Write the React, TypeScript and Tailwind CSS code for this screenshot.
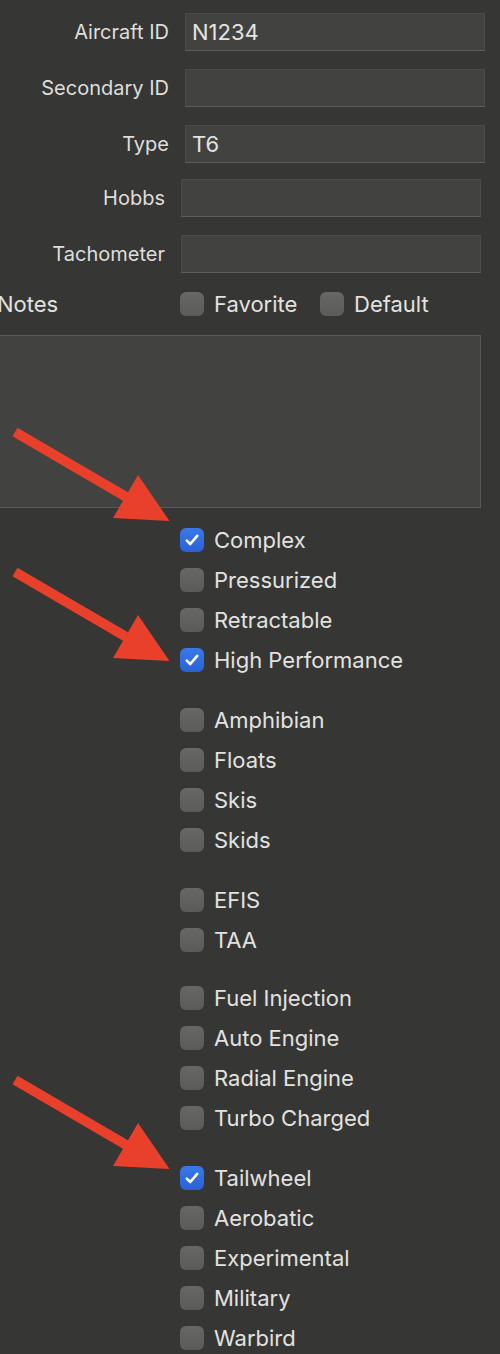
import React from "react";

const font = { fontFamily: '"Inter", "Liberation Sans", sans-serif' };

function Check({ on }: { on?: boolean }) {
  if (on) {
    return (
      <div className="w-[24px] h-[24px] rounded-[6px] bg-gradient-to-b from-[#3a78ea] to-[#2a62d4] flex items-center justify-center shrink-0">
        <svg width="16" height="16" viewBox="0 0 16 16">
          <path d="M2.8 8.6 L6.3 12 L13.2 3.8" fill="none" stroke="white" strokeWidth="2.6" strokeLinecap="round" strokeLinejoin="round" />
        </svg>
      </div>
    );
  }
  return <div className="w-[24px] h-[24px] rounded-[6px] bg-gradient-to-b from-[#676765] to-[#5b5b59] shrink-0" />;
}

function Field({ label, value, labelW, fieldW }: { label: string; value?: string; labelW: number; fieldW: number }) {
  return (
    <div className="flex items-center">
      <div className="text-right text-[20px] text-[#dededc] shrink-0" style={{ width: labelW }}>
        {label}
      </div>
      <div
        className="h-[38px] bg-[#424240] border border-[#4b4b49] border-b-[#5e5e5c] flex items-center px-[6px] text-[22px] text-[#e4e4e2] shrink-0 ml-[16px]"
        style={{ width: fieldW }}
      >
        {value}
      </div>
    </div>
  );
}

function Row({ label, on }: { label: string; on?: boolean }) {
  return (
    <div className="h-[40px] flex items-center pl-[180px]">
      <Check on={on} />
      <span className="ml-[10px] text-[22px] text-[#e2e2e0]">{label}</span>
    </div>
  );
}

function Arrow({ dy }: { dy: number }) {
  const pts = [
    [17.5, 427.7],
    [128, 492.2],
    [138, 475],
    [169.5, 521],
    [113, 518],
    [123, 500.8],
    [12.5, 436.3],
  ]
    .map(([x, y]) => `${x},${y + dy}`)
    .join(" ");
  return <polygon points={pts} fill="#e8402a" />;
}

export default function App() {
  return (
    <div className="w-[500px] h-[1354px] bg-[#363634] relative overflow-hidden" style={font}>
      <div className="pt-[13px]">
        <Field label="Aircraft ID" value="N1234" labelW={169} fieldW={300} />
        <div className="h-[18px]" />
        <Field label="Secondary ID" labelW={169} fieldW={300} />
        <div className="h-[18px]" />
        <Field label="Type" value="T6" labelW={169} fieldW={300} />
        <div className="h-[16px]" />
        <Field label="Hobbs" labelW={165} fieldW={300} />
        <div className="h-[18px]" />
        <Field label="Tachometer" labelW={165} fieldW={300} />

        <div className="mt-[19px] h-[24px] flex items-center">
          <div className="w-[180px] shrink-0 text-[22px] text-[#e2e2e0]">
            <span className="-ml-[3px]">Notes</span>
          </div>
          <div className="w-[140px] shrink-0 flex items-center">
            <Check />
            <span className="ml-[10px] text-[22px] text-[#e2e2e0]">Favorite</span>
          </div>
          <div className="flex items-center">
            <Check />
            <span className="ml-[10px] text-[22px] text-[#e2e2e0]">Default</span>
          </div>
        </div>

        <div className="mt-[19px] -ml-[1px] w-[482px] h-[173px] bg-[#424240] border border-[#5a5a58]" />

        <div className="mt-[12px]">
          <Row label="Complex" on />
          <Row label="Pressurized" />
          <Row label="Retractable" />
          <Row label="High Performance" on />
          <div className="h-[20px]" />
          <Row label="Amphibian" />
          <Row label="Floats" />
          <Row label="Skis" />
          <Row label="Skids" />
          <div className="h-[20px]" />
          <Row label="EFIS" />
          <Row label="TAA" />
          <div className="h-[18px]" />
          <Row label="Fuel Injection" />
          <Row label="Auto Engine" />
          <Row label="Radial Engine" />
          <Row label="Turbo Charged" />
          <div className="h-[20px]" />
          <Row label="Tailwheel" on />
          <Row label="Aerobatic" />
          <Row label="Experimental" />
          <Row label="Military" />
          <Row label="Warbird" />
        </div>
      </div>

      <svg className="absolute inset-0 pointer-events-none" width="500" height="1354" viewBox="0 0 500 1354">
        <Arrow dy={0} />
        <Arrow dy={140} />
        <Arrow dy={648} />
      </svg>
    </div>
  );
}
